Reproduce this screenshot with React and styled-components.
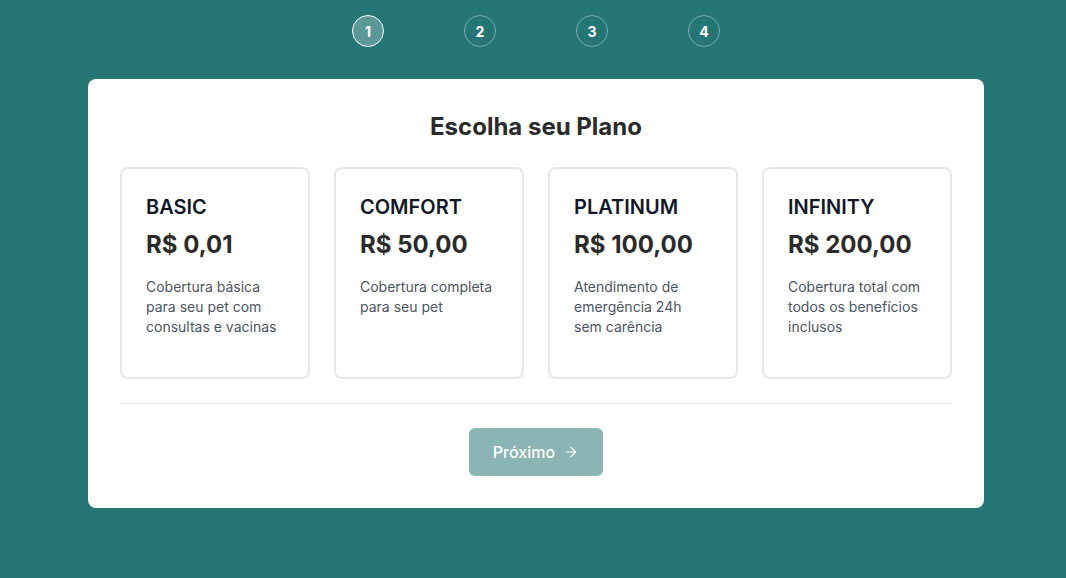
import styled, { createGlobalStyle } from "styled-components";

const GlobalStyle = createGlobalStyle`
  body {
    margin: 0;
    background: #267675;
    font-family: Inter, "Noto Sans", sans-serif;
  }
`;

const plans = [
  { name: "BASIC", price: "R$ 0,01", desc: "Cobertura básica para seu pet com consultas e vacinas" },
  { name: "COMFORT", price: "R$ 50,00", desc: "Cobertura completa para seu pet" },
  { name: "PLATINUM", price: "R$ 100,00", desc: "Atendimento de emergência 24h sem carência" },
  { name: "INFINITY", price: "R$ 200,00", desc: "Cobertura total com todos os benefícios inclusos" },
];

const Page = styled.div`
  min-height: 578px;
  display: flex;
  flex-direction: column;
  align-items: center;
  padding: 15px 0 0 6px;
  box-sizing: border-box;
`;

const Steps = styled.div`
  display: flex;
  gap: 80px;
  margin-bottom: 32px;
`;

const Step = styled.div`
  width: 32px;
  height: 32px;
  box-sizing: border-box;
  border-radius: 50%;
  border: ${(p) => (p.$active ? "1.5px solid #ffffff" : "1px solid rgba(255,255,255,0.4)")};
  background: ${(p) => (p.$active ? "rgba(255,255,255,0.25)" : "transparent")};
  color: #fff;
  font-size: 14px;
  font-weight: 700;
  display: flex;
  align-items: center;
  justify-content: center;
`;

const Card = styled.div`
  width: 896px;
  box-sizing: border-box;
  background: #fff;
  border-radius: 8px;
  padding: 32px;
`;

const Title = styled.h2`
  margin: 0 0 24px;
  text-align: center;
  font-size: 24px;
  line-height: 32px;
  font-weight: 700;
  color: #2b2b2b;
`;

const Grid = styled.div`
  display: grid;
  grid-template-columns: repeat(4, 1fr);
  gap: 24px;
`;

const Plan = styled.div`
  border: 2px solid #e5e7eb;
  border-radius: 8px;
  padding: 24px;
  min-height: 212px;
  box-sizing: border-box;
`;

const PlanName = styled.div`
  font-size: 20px;
  line-height: 28px;
  font-weight: 600;
  color: #111827;
`;

const Price = styled.div`
  margin-top: 8px;
  font-size: 24px;
  line-height: 32px;
  font-weight: 700;
  color: #2b2b2b;
`;

const Desc = styled.p`
  margin: 16px 0 0;
  font-size: 14px;
  line-height: 20px;
  color: #4b5563;
`;

const Footer = styled.div`
  margin-top: 24px;
  border-top: 1px solid #e5e7eb;
  padding-top: 24px;
  display: flex;
  justify-content: center;
`;

const NextButton = styled.button`
  width: 134px;
  height: 48px;
  border: none;
  border-radius: 6px;
  background: #8bb5b4;
  color: #fff;
  font-family: inherit;
  font-size: 16px;
  font-weight: 500;
  display: flex;
  align-items: center;
  justify-content: center;
  gap: 8px;
  cursor: not-allowed;
`;

export default function App() {
  return (
    <>
      <GlobalStyle />
      <Page>
        <Steps>
          {[1, 2, 3, 4].map((n) => (
            <Step key={n} $active={n === 1}>
              {n}
            </Step>
          ))}
        </Steps>
        <Card>
          <Title>Escolha seu Plano</Title>
          <Grid>
            {plans.map((p) => (
              <Plan key={p.name}>
                <PlanName>{p.name}</PlanName>
                <Price>{p.price}</Price>
                <Desc>{p.desc}</Desc>
              </Plan>
            ))}
          </Grid>
          <Footer>
            <NextButton disabled>
              Próximo
              <svg width="16" height="16" viewBox="0 0 24 24" fill="none" stroke="currentColor" strokeWidth="1.75" strokeLinecap="round" strokeLinejoin="round">
                <path d="M5 12h14" />
                <path d="m12 5 7 7-7 7" />
              </svg>
            </NextButton>
          </Footer>
        </Card>
      </Page>
    </>
  );
}
